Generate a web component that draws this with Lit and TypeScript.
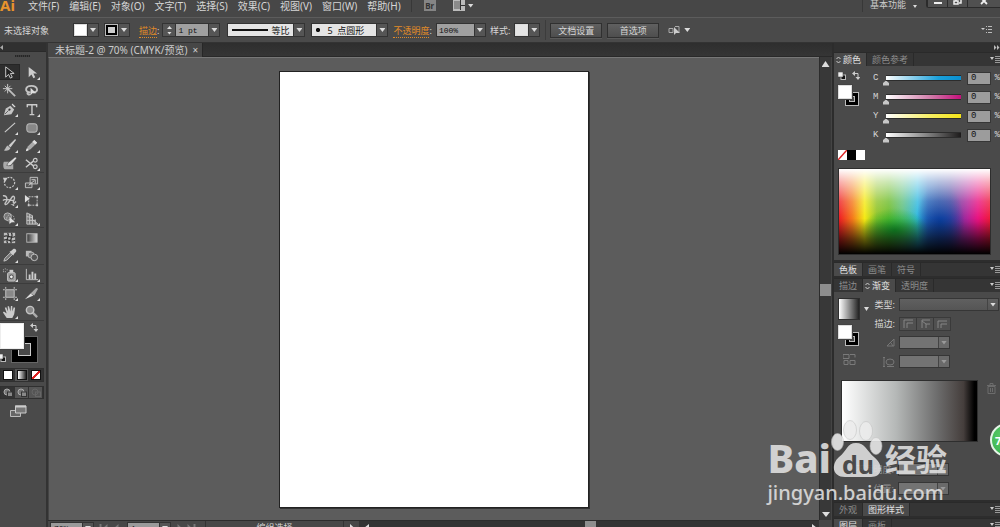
import { LitElement, html, svg, css } from "lit";
import { customElement, property } from "lit/decorators.js";

const ui = css`
  :host {
    font-family: "Noto Sans", "Noto Sans CJK SC", sans-serif;
    font-size: 9px;
    line-height: 13px;
    color: #d6d6d6;
    box-sizing: border-box;
  }
  *, *::before, *::after { box-sizing: border-box; }
  button, input, select {
    font: inherit;
    color: inherit;
    margin: 0;
    padding: 0;
    border: 0;
    border-radius: 0;
    background: none;
    outline: 0;
    appearance: none;
    min-width: 0;
  }
  svg { display: block; flex: none; }
  .mono { font-family: "Liberation Mono", "Noto Sans CJK SC", monospace; font-size: 8px; }
  .arrow {
    width: 11px;
    flex: none;
    align-self: stretch;
    display: grid;
    place-items: center;
    background: #555;
    border-left: 1px solid #333;
  }
  .arrow::before, .tri {
    content: "";
    width: 6px;
    height: 4px;
    background: #dcdcdc;
    clip-path: polygon(0 0, 100% 0, 50% 100%);
  }
`;

/* Tool glyphs, drawn on a 16 x 16 grid */
const tools: Record<string, [string, unknown]> = {
  select: ["选择工具", svg`<path d="M5 2v11l3-3 2 4 2-1-2-4h4z" fill="#222" stroke="#d0d0d0"/>`],
  direct: ["直接选择工具", svg`<path d="M5 2v11l3-3 2 4 2-1-2-4h4z" fill="#ccc"/>`],
  wand: ["魔棒工具", svg`<path d="M7 7l7 7" stroke="#bbb" stroke-width="2"/><path d="M6 1v10M1 6h10M3 3l6 6M9 3l-6 6" stroke="#ccc"/>`],
  lasso: ["套索工具", svg`<path d="M7 10C0 10 1 3 8 3s8 7 2 7M4 9c-1 3 1 4 3 3" fill="none" stroke="#c4c4c4" stroke-width="2"/><path d="M7 5v8l2-2h4z" fill="#ddd"/>`],
  pen: ["钢笔工具", svg`<path d="M2 14l2-7 5-3 4 4-3 5z" fill="#c4c4c4"/><path d="M10 3l1-2 4 4-2 1zM3 13l4-4" fill="#ddd" stroke="#444" stroke-width=".8"/><circle cx="8" cy="8" r="1.2" fill="#333"/>`],
  type: ["文字工具", svg`<path d="M3 3h11M8.500 3v10M6 13.500h5M3.500 2.500v3M13.500 2.500v3" stroke="#ccc" stroke-width="1.500"/>`],
  line: ["直线段工具", svg`<path d="M3 13L14 3" stroke="#ccc" stroke-width="1.200"/>`],
  round: ["圆角矩形工具", svg`<rect x="3" y="4" width="11" height="9" rx="2.500" fill="#888" stroke="#c4c4c4"/>`],
  brush: ["画笔工具", svg`<path d="M14 1L7 8l2 2 6-8z" fill="#ccc"/><path d="M6 8l3 3c-2 3-5 3-7 2 2-1 2-4 4-5z" fill="#bbb"/>`],
  pencil: ["铅笔工具", svg`<path d="M2 14l2-5 7-7 3 3-7 7z" fill="#aaa"/><path d="M11 2l3 3-2 2-3-3z" fill="#e0e0e0"/><path d="M2 14l1-3 2 2z" fill="#eee"/>`],
  blob: ["斑点画笔工具", svg`<path d="M2 6h6l-2 3 3 2 3-3v6H3c-2-1-2-6-1-8z" fill="#aaa"/><path d="M14 1L8 6c-2 1-2 3-3 4 3 1 5 0 6-2l5-6z" fill="#ddd" stroke="#444" stroke-width=".6"/>`],
  scissors: ["剪刀工具", svg`<circle cx="12" cy="4.500" r="2" fill="none" stroke="#ccc" stroke-width="1.300"/><circle cx="12" cy="11.500" r="2" fill="none" stroke="#ccc" stroke-width="1.300"/><path d="M2 4l8 6.500M2 12l8-6.500" stroke="#ccc" stroke-width="1.500"/>`],
  rotate: ["旋转工具", svg`<circle cx="8" cy="8" r="5.500" fill="none" stroke="#c4c4c4" stroke-width="1.300" stroke-dasharray="2 1.300"/><path d="M1 3l5 0-3 5z" fill="#ccc"/>`],
  scale: ["比例缩放工具", svg`<path d="M1.500 8.500h7v5h-7zM6.500 2.500h8v7h-8z" fill="#666" fill-opacity=".4" stroke="#c4c4c4"/><path d="M5 11l6-5M8 5h4v4" fill="none" stroke="#ccc"/>`],
  warp: ["宽度工具", svg`<path d="M1 3c5-1 5 5 3 7s0 4 3 0 4-8 6-6-3 6 0 7l2-2M1 8c3-3 7 0 11 0" fill="none" stroke="#c4c4c4" stroke-width="1.500"/><path d="M9 12h4v2z" fill="#ccc"/>`],
  free: ["自由变换工具", svg`<rect x="5" y="4" width="9" height="9" fill="none" stroke="#c4c4c4" stroke-dasharray="2 1"/><path d="M1 2v8l5-4z" fill="#ddd"/><path d="M13 3h2v2h-2zM13 12h2v2h-2zM4 12h2v2H4z" fill="#ccc"/>`],
  shape: ["形状生成器工具", svg`<circle cx="6" cy="6" r="4" fill="#777" stroke="#bbb"/><circle cx="9" cy="8" r="4" fill="none" stroke="#bbb" stroke-dasharray="2 1"/><path d="M8 6v8l2-2h4z" fill="#ddd"/>`],
  graph3: ["透视网格工具", svg`<path d="M3 2v12h12L9 9V5zM3 6l6 1M3 10h9M6 3v11M9 5v9M12 9v5" fill="#777" stroke="#c4c4c4"/>`],
  mesh: ["网格工具", svg`<rect x="2" y="3" width="12" height="11" fill="#bbb"/><path d="M2 7c4-3 8 3 12 0M2 11c4-3 8 3 12 0M6 3c3 4-3 7 0 11M10 3c3 4-3 7 0 11" fill="none" stroke="#333" stroke-width="1.300"/>`],
  grad: ["渐变工具", svg`<defs><linearGradient id="tg"><stop stop-color="#333"/><stop offset="1" stop-color="#ddd"/></linearGradient></defs><rect x="3" y="4" width="11" height="9" fill="url(#tg)" stroke="#bbb"/>`],
  drop: ["吸管工具", svg`<path d="M2 14l1-3 6-6 2 2-6 6z" fill="#777" stroke="#c4c4c4"/><path d="M8 4l4 4 1-2 2-2c1-2-1-4-3-3l-2 2z" fill="#ccc"/>`],
  blend: ["混合工具", svg`<rect x="2" y="3" width="6" height="6" fill="#bbb"/><rect x="4.500" y="4.500" width="6" height="6" rx="2" fill="#777" stroke="#bbb"/><circle cx="11" cy="10" r="3.500" fill="#555" stroke="#c4c4c4"/>`],
  spray: ["符号喷枪工具", svg`<rect x="6" y="6" width="8" height="9" rx="1" fill="#999" stroke="#ccc"/><path d="M8 3h4v3H8z" fill="#ccc"/><circle cx="10" cy="10.500" r="2" fill="#eee" stroke="#444"/><path d="M1 3h1M3 2h1M5 3h1M1 5h1M3 5h1" stroke="#bbb"/>`],
  chart: ["柱形图工具", svg`<path d="M2.500 2v11.500H15" fill="none" stroke="#c4c4c4"/><path d="M5 8h2v5H5zM8 5h2v8H8zM11 7h2v6h-2z" fill="#ccc"/>`],
  artboard: ["画板工具", svg`<rect x="4" y="4" width="9" height="8" fill="#888" stroke="#c4c4c4"/><path d="M4 1v2M13 1v2M4 13v2M13 13v2M1 4h2M1 12h2M14 4h2M14 12h2" stroke="#ccc"/>`],
  slice: ["切片工具", svg`<path d="M1 14l6-6 3 2z" fill="#ddd"/><path d="M7 8l6-6 2 1-4 7z" fill="#aaa"/>`],
  hand: ["抓手工具", svg`<path d="M5 15L1 9l1-1 3 2L3 4l1.500-.500L6.500 8 6 2.500h1.500L9 8l.500-6H11v6l1.500-4.500 1.500.500-1 7-2 4z" fill="#ccc"/>`],
  zoom: ["缩放工具", svg`<path d="M9 9l5 5" stroke="#aaa" stroke-width="2.500"/><circle cx="6.500" cy="6.500" r="4" fill="#888" stroke="#c4c4c4" stroke-width="1.500"/>`],
};
const toolGroups = [
  ["select", "direct", "wand", "lasso"],
  ["pen", "type", "line", "round", "brush", "pencil", "blob", "scissors"],
  ["rotate", "scale", "warp", "free", "shape", "graph3"],
  ["mesh", "grad", "drop", "blend"],
  ["spray", "chart"],
  ["artboard", "slice", "hand", "zoom"],
];
const plain = new Set(["select", "wand", "lasso", "blob", "mesh", "grad", "blend", "free", "zoom"]);

const swapIcon = html`<svg width="8" height="9" viewBox="0 0 8 9"><path d="M3 2.500h3v4" fill="none" stroke="#ccc"/><path d="M0 2.500L3 0v5zM3.500 6h5L6 9z" fill="#ccc"/></svg>`;
const defaultIcon = html`<svg width="8" height="8" viewBox="0 0 8 8"><rect x="3" y="3" width="4.500" height="4.500" fill="#111" stroke="#bbb"/><rect x="0" y="0" width="5" height="5" fill="#eee" stroke="#333" stroke-width=".5"/></svg>`;
const menuIcon = html`<svg width="10" height="9" viewBox="0 0 10 9"><path d="M0 2h4L2 5z" fill="#ccc"/><path d="M5 1.500h5M5 3.500h5M5 5.500h5M5 7.500h5" stroke="#999"/></svg>`;

@customElement("ai-menubar")
export class AiMenubar extends LitElement {
  static styles = [ui, css`
    :host { display: flex; align-items: flex-start; height: 17px; background: #474747; overflow: hidden; }
    nav { display: flex; gap: 10px; margin-left: 14px; font-size: 10px; line-height: 12px; }
    .logo { width: 14px; height: 12px; font-weight: 700; font-size: 15px; line-height: 10px; color: #e8932c; }
    .line { width: 1px; height: 12px; background: #383838; }
    .br { width: 12px; height: 11px; background: #858585; color: #333; font-size: 8px; font-weight: 700; line-height: 11px; text-align: center; margin: 0 17px 0 12px; }
    .layout { display: flex; align-items: center; gap: 3px; height: 11px; }
    .space { display: flex; align-items: flex-start; margin-left: auto; gap: 7px; line-height: 10px; color: #ccc; }
    .space .tri { margin-top: 5px; width: 4px; height: 3px; }
    .win { display: grid; grid-template-columns: 20px 20px 33px; height: 8px; margin-left: 9px; border: 1px solid #2b2b2b; border-top: 0; border-right: 0; border-radius: 0 0 0 3px; }
    .win button { display: grid; place-items: center; border-left: 1px solid #2b2b2b; background: #505050; }
  `];
  render() {
    const items = ["文件(F)", "编辑(E)", "对象(O)", "文字(T)", "选择(S)", "效果(C)", "视图(V)", "窗口(W)", "帮助(H)"];
    return html`
      <span class="logo">Ai</span>
      <nav>${items.map((t) => html`<button>${t}</button>`)}<span class="line"></span></nav>
      <button class="br" aria-label="Bridge">Br</button>
      <button class="layout" aria-label="排列文档"><svg width="12" height="11" viewBox="0 0 12 11"><path d="M0 0h12v11H0z" fill="#bbb"/><path d="M1 1h6v8H1z" fill="#8a8a8a"/><path d="M7.500 0v10M8 5.500h4" stroke="#333"/></svg><i class="tri"></i></button>
      <button class="space"><span class="line"></span>基本功能<i class="tri"></i></button>
      <div class="win">
        <button aria-label="最小化"><svg width="8" height="7" viewBox="0 0 8 7"><path d="M0 3h8" stroke="#eee" stroke-width="2"/></svg></button>
        <button aria-label="还原"><svg width="9" height="7" viewBox="0 0 9 7"><path d="M3 0v1M8 0v3H6M1 1h4v3H1z" fill="none" stroke="#eee" stroke-width="1.500"/></svg></button>
        <button aria-label="关闭"><svg width="8" height="7" viewBox="0 0 8 7"><path d="M1 4l6-6M1-2l6 6" stroke="#eee" stroke-width="1.800"/></svg></button>
      </div>`;
  }
}

@customElement("ai-control-bar")
export class AiControlBar extends LitElement {
  static styles = [ui, css`
    :host { display: flex; align-items: center; height: 26px; padding: 0 8px 0 4px; background: #4a4a4a; border-top: 1px solid #5c5c5c; border-bottom: 1px solid #333; white-space: nowrap; }
    .box { display: flex; align-items: center; height: 14px; border: 1px solid #333; background: #a0a0a0; color: #111; position: relative; }
    .chip { width: 13px; height: 12px; background: #fff; border: 1px solid #ddd; }
    .chip.ring { background: #ccc; border: 3px solid #000; outline: 1px solid #bbb; outline-offset: -1px; }
    .chip.pale { background: #e4e4e4; }
    .state { width: 69px; }
    .l1 { margin: 0 3px 0 9px; }
    .l2 { margin: 0 4px 0 5px; }
    .l3 { margin: 0 4px; }
    .gap { margin-left: 5px; }
    .similar { display: flex; align-items: center; gap: 4px; margin-left: 9px; }
    .link { color: #e08a28; border-bottom: 1px dotted #e08a28; line-height: 11px; }
    .spin { display: grid; width: 13px; height: 14px; border: 1px solid #333; border-right: 0; background: #555; place-items: center; }
    .spin .tri { width: 5px; height: 3px; }
    .up { transform: rotate(180deg); }
    .sel { width: 100%; height: 12px; background: #e4e4e4; }
    .profile { width: 78px; margin-left: 7px; }
    .profile .sel { padding-left: 43px; background: linear-gradient(#111, #111) 4px 5px / 36px 2px no-repeat, #e4e4e4; }
    .brush { width: 77px; margin-left: 6px; }
    .brush .sel { padding-left: 15px; background: radial-gradient(circle at 6px 6px, #111 1.800px, transparent 2.400px), #e4e4e4; }
    .num { padding-left: 2px; height: 12px; }
    .pt { width: 32px; } .pct { width: 37px; }
    .btn { width: 52px; height: 15px; border: 1px solid #303030; background: linear-gradient(#606060, #4e4e4e); box-shadow: 0 1px 0 #5a5a5a; }
    .sep { width: 1px; height: 20px; background: #3c3c3c; margin: 0 4px 0 5px; }
    .tail { margin-left: auto; }
  `];
  render() {
    return html`
      <span class="state">未选择对象</span>
      <button class="box" aria-label="填色"><span class="chip"></span><i class="arrow"></i></button>
      <button class="box gap" aria-label="描边颜色"><span class="chip ring"></span><i class="arrow"></i></button>
      <label for="w" class="l1"><span class="link">描边</span>:</label>
      <button class="spin" aria-label="粗细增减"><i class="tri up"></i><i class="tri"></i></button>
      <span class="box"><input id="w" class="num mono pt" value="1 pt"><i class="arrow"></i></span>
      <span class="box profile"><select class="sel" aria-label="变量宽度配置文件"><option>等比</option></select><i class="arrow"></i></span>
      <span class="box brush"><select class="sel" aria-label="画笔定义"><option>5&nbsp; 点圆形</option></select><i class="arrow"></i></span>
      <label for="o" class="l2"><span class="link">不透明度</span>:</label>
      <span class="box"><input id="o" class="num mono pct" value="100%"><i class="arrow"></i></span>
      <span class="l3">样式:</span>
      <button class="box" aria-label="图形样式"><span class="chip pale"></span><i class="arrow"></i></button>
      <i class="sep"></i>
      <button class="btn">文档设置</button>
      <button class="btn gap">首选项</button>
      <button aria-label="选择类似的对象" class="similar"><svg width="12" height="11" viewBox="0 0 12 11"><path d="M1 3.500h4v4H1zM7 1.500h4v6" fill="none" stroke="#aaa"/><path d="M6 2v8l2-2h4z" fill="#ccc"/></svg><i class="tri"></i></button>
      <button class="tail" aria-label="面板菜单"><svg width="11" height="8" viewBox="0 0 11 8"><path d="M0 2h4L2 4z" fill="#ccc"/><path d="M5 .5h1M7 .5h4M5 3.500h1M7 3.500h4M5 6.500h1M7 6.500h4" stroke="#bbb"/></svg></button>`;
  }
}

@customElement("ai-toolbox")
export class AiToolbox extends LitElement {
  static styles = [ui, css`
    :host { display: block; background: #4a4a4a; border-right: 2px solid #333; overflow: hidden; }
    .head { height: 9px; background: #303030; border-bottom: 1px solid #2a2a2a; padding-top: 2px; }
    .grip { height: 11px; display: flex; justify-content: center; padding: 3px 2px 0 0; }
    .grip i { width: 15px; height: 2px; background: repeating-linear-gradient(90deg, #262626 0 1px, #3a3a3a 1px 2px); }
    .group { display: grid; grid-template-columns: 22px 22px; grid-auto-rows: 18px; border-bottom: 1px solid #3c3c3c; width: 44px; margin-right: auto; }
    .tool { display: grid; place-items: center; position: relative; }
    .tool.on { background: #2e2e2e; border: 1px solid #262626; border-left: 0; margin: 1px 2px 1px 0; }
    .tool svg { width: 15px; height: 15px; margin-right: 4px; }
    .tool.on svg { margin-right: 2px; }
    .tool.more::after { content: ""; position: absolute; right: 4px; bottom: 1px; width: 3px; height: 3px; background: #ddd; clip-path: polygon(100% 0, 100% 100%, 0 100%); }
    .paint { position: relative; height: 47px; }
    .fill { position: absolute; left: 0; top: 2px; width: 24px; height: 26px; background: #fff; border: 1px solid #eee; box-shadow: 0 0 0 1px #444; }
    .stroke { position: absolute; left: 12px; top: 16px; width: 25px; height: 25px; border: 6px solid #000; background: #4a4a4a; box-shadow: inset 0 0 0 1px #ccc, 0 0 0 1px #666; }
    .swap { position: absolute; left: 30px; top: 2px; }
    .def { position: absolute; left: -2px; top: 33px; }
    .modes { display: grid; grid-template-columns: repeat(3, 1fr); width: 44px; height: 14px; border: 1px solid #303030; background: #555; }
    .modes + .modes { height: 13px; margin-top: 4px; }
    .modes button { display: grid; place-items: center; border-right: 1px solid #333; }
    .modes .on { background: #333; }
    .sw { width: 10px; height: 10px; border: 1px solid #111; background: #fff; }
    .sw.g { background: linear-gradient(90deg, #fff, #222); }
    .sw.n { background: linear-gradient(to bottom right, #fff 42%, #d22 42% 58%, #fff 58%); }
    .screen { display: block; margin: 6px 0 0 10px; }
  `];
  render() {
    return html`
      <div class="head"><svg width="4" height="5" viewBox="0 0 4 5"><path d="M3 0v5L0 2.500z" fill="#aaa"/></svg></div>
      <div class="grip"><i></i></div>
      ${toolGroups.map((g) => html`<div class="group">${g.map((k) => html`
        <button class="tool ${k === "select" ? "on" : ""} ${plain.has(k) ? "" : "more"}" aria-label=${tools[k][0]}>
          <svg viewBox="0 0 16 16">${tools[k][1]}</svg></button>`)}</div>`)}
      <div class="paint">
        <button class="stroke" aria-label="描边"></button>
        <button class="fill" aria-label="填色"></button>
        <button class="swap" aria-label="互换">${swapIcon}</button>
        <button class="def" aria-label="默认">${defaultIcon}</button>
      </div>
      <div class="modes"><button class="on" aria-label="颜色"><i class="sw"></i></button><button aria-label="渐变"><i class="sw g"></i></button><button class="on" aria-label="无"><i class="sw n"></i></button></div>
      <div class="modes">
        ${["#aaa", "#aaa", "#666"].map((c, i) => html`<button class=${i ? "" : "on"} aria-label="绘图模式"><svg width="10" height="9" viewBox="0 0 10 9"><circle cx="4" cy="4" r="3" fill=${i === 2 ? "none" : "#777"} stroke=${c}/><rect x="4.500" y="4" width="5" height="4.500" fill=${i === 2 ? "none" : "#888"} stroke=${i === 2 ? c : "#333"}/></svg></button>`)}
      </div>
      <button class="screen" aria-label="更改屏幕模式"><svg width="17" height="13" viewBox="0 0 17 13"><path d="M.5 5.500h10v6H.5z" fill="#666" stroke="#bbb"/><path d="M5.500 1h10.500v7H5.500z" fill="#777" stroke="#ccc"/><path d="M5 1.500h11" stroke="#ccc" stroke-width="2"/></svg></button>`;
  }
}

@customElement("ai-document")
export class AiDocument extends LitElement {
  static styles = [ui, css`
    :host { display: grid; grid-template: 14px 1fr 7px / 1fr 13px; min-width: 0; min-height: 0; overflow: hidden; }
    .tabs { grid-column: 1 / 3; background: linear-gradient(#2e2e2e, #353535); border-bottom: 1px solid #292929; }
    .tab { display: flex; align-items: center; gap: 5px; width: max-content; height: 14px; padding: 0 4px 0 7px; background: #474747; border-right: 1px solid #272727; font-size: 10px; color: #ccc; }
    .canvas { display: grid; place-items: center; background: #5c5c5c; border-top: 1px solid #777; border-left: 1px solid #444; min-height: 0; }
    .board { height: calc(100% - 25px); aspect-ratio: 310 / 437; background: #fff; border: 1px solid #222; box-shadow: 1px 1px 0 #333; }
    .vbar { display: flex; flex-direction: column; align-items: center; justify-content: space-between; background: #383838; border-left: 1px solid #2c2c2c; border-right: 1px solid #444; padding: 4px 0 3px; }
    .vbar .t { width: 8px; height: 6px; background: #ddd; clip-path: polygon(0 100%, 100% 100%, 50% 0); }
    .vbar .d { transform: rotate(180deg); height: 5px; }
    .thumb { width: 11px; height: 12px; background: #8e8e8e; }
    .status { display: grid; grid-template-columns: 311px 1fr; overflow: hidden; background: #474747; border-top: 1px solid #2c2c2c; }
    .info, .hbar { height: 14px; display: flex; align-items: center; }
    .field { display: flex; height: 13px; background: #9a9a9a; color: #111; border: 1px solid #333; margin-left: 2px; }
    .field input { width: 31px; padding-left: 3px; }
    .nav { width: 31px; display: flex; justify-content: center; }
    .mode { flex: 1; text-align: center; border-left: 1px solid #333; border-right: 1px solid #333; margin-left: 3px; line-height: 14px; }
    .hbar { background: #333; justify-content: space-between; padding: 0 2px 0 5px; }
    .hbar .thumb { height: 14px; }
    .corner { background: #474747; }
  `];
  render() {
    const nav = (d: string) => html`<svg class="nav" width="20" height="9" viewBox="0 0 20 9"><path d=${d} fill="#777"/></svg>`;
    return html`
      <div class="tabs"><button class="tab">未标题-2 @ 70% (CMYK/预览)<span>×</span></button></div>
      <div class="canvas"><div class="board"></div></div>
      <div class="vbar"><i class="t"></i><i class="thumb"></i><i class="t d"></i></div>
      <div class="status">
        <div class="info">
          <span class="field mono"><input aria-label="缩放" value="70%"><i class="arrow"></i></span>
          ${nav("M0 0h2v9H0zM8 0v9L3 4.500zM19 0v9l-5-4.500z")}
          <span class="field mono"><input aria-label="画板" value="1"><i class="arrow"></i></span>
          ${nav("M1 0v9l5-4.500zM11 0v9l5-4.500zM17 0h2v9h-2z")}
          <span class="mode">编组选择</span>
          <svg width="15" height="9" viewBox="0 0 15 9"><path d="M6 0v9l5-4.500z" fill="#ddd"/></svg>
        </div>
        <div class="hbar"><svg width="5" height="8" viewBox="0 0 5 8"><path d="M5 0v8L0 4z" fill="#ddd"/></svg><i class="thumb"></i><svg width="5" height="8" viewBox="0 0 5 8"><path d="M0 0v8l5-4z" fill="#ddd"/></svg></div>
      </div>
      <div class="corner"></div>`;
  }
}

@customElement("ai-tabs")
export class AiTabs extends LitElement {
  @property({ attribute: false }) labels: string[] = [];
  @property({ type: Number }) active = 0;
  @property({ type: Boolean }) cycle = false;
  static styles = [ui, css`
    :host { display: flex; height: 14px; background: #353535; flex: none; border-top: 1px solid #2a2a2a; }
    button { display: flex; align-items: center; gap: 2px; padding: 0 5px; color: #8c8c8c; border-right: 1px solid #2a2a2a; white-space: nowrap; }
    .on { background: #4a4a4a; color: #e0e0e0; }
    .cycle { padding-left: 2px; }
    .menu { margin-left: auto; border: 0; padding: 0; }
  `];
  render() {
    return html`${this.labels.map((l, i) => html`<button class="${i === this.active ? "on" : ""} ${i === this.active && this.cycle ? "cycle" : ""}">
        ${i === this.active && this.cycle ? html`<svg width="5" height="8" viewBox="0 0 5 8"><path d="M.5 3l2-2 2 2M.5 5l2 2 2-2" fill="none" stroke="#ccc"/></svg>` : ""}${l}</button>`)}
      <button class="menu" aria-label="面板菜单">${menuIcon}</button>`;
  }
}

@customElement("ai-panels")
export class AiPanels extends LitElement {
  static styles = [ui, css`
    :host { display: flex; flex-direction: column; background: #4a4a4a; border-left: 2px solid #2c2c2c; overflow: hidden; min-height: 0; }
    .head { height: 9px; flex: none; background: #303030; display: flex; justify-content: flex-end; align-items: center; }
    .gap { height: 2px; flex: none; background: #2d2d2d; }
    .last { margin-bottom: -5px; }
    .color { padding: 6px 0 5px 4px; }
    .cols { display: grid; grid-template-columns: 35px 1fr; }
    .left { display: grid; align-content: start; position: relative; }
    .icons { display: flex; gap: 6px; margin: -1px 0 5px; height: 9px; align-items: center; }
    .pair { display: grid; grid-template: 7px 7px 7px / 7px 7px 7px; }
    .f { grid-area: 1 / 1 / 3 / 3; background: #fff; border: 1px solid #ddd; box-shadow: 0 0 0 1px #444; z-index: 1; }
    .s { grid-area: 2 / 2 / 4 / 4; border: 4px solid #000; outline: 1px solid #bbb; outline-offset: -1px; background: #4a4a4a; box-shadow: inset 0 0 0 1px #bbb; }
    .row { display: grid; grid-template-columns: 13px 1fr 6px 24px 9px; height: 13px; margin-bottom: 6px; align-items: center; font-size: 9px; }
    .row input[type="text"] { grid-column: 4; height: 13px; background: #9c9c9c; border: 1px solid #363636; color: #111; padding-left: 3px; }
    .row span { text-align: right; }
    input[type="range"] { height: 13px; margin: 0 -3px; background: var(--ramp) center 4px / calc(100% - 6px) 4px no-repeat, linear-gradient(#2c2c2c, #2c2c2c) center 3px / calc(100% - 6px) 6px no-repeat; }
    input[type="range"]::-webkit-slider-thumb { appearance: none; width: 6px; height: 5px; margin-top: 9px; background: #c8c8c8; clip-path: polygon(50% 0, 100% 50%, 100% 100%, 0 100%, 0 50%); }
    .chips { display: grid; grid-template-columns: repeat(3, 9px); height: 10px; margin-top: 2px; }
    .k { background: #000; } .w { background: #fff; }
    .spectrum { height: 87px; margin: 8px 9px 0 0; border: 1px solid #2e2e2e;
      background:
        linear-gradient(#fff 0, rgba(255,255,255,.65) 15%, rgba(255,255,255,.2) 38%, rgba(255,255,255,0) 58%, rgba(0,0,0,.08) 62%, rgba(0,0,0,.6) 82%, #000 100%),
        radial-gradient(ellipse 16% 45% at 67% 62%, #0b3f9e, transparent),
        radial-gradient(ellipse 22% 26% at 37% 72%, #16a82e, transparent),
        linear-gradient(90deg, #ee1c24 0, #f47a1a 9%, #f5ea14 17%, #90c428 25%, #6cbc2c 33%, #5fc080 42%, #30b8e0 52%, #2a70c0 59%, #2c50a8 66%, #4a3c9c 74%, #b0249a 85%, #ea1280 92%, #ee1a3a 100%); }
    .grad { flex: 1; padding: 6px 0 0 4px; min-height: 0; }
    .form { display: grid; grid-template-columns: 22px 1fr; row-gap: 6px; column-gap: 4px; grid-auto-rows: 13px; align-items: center; }
    .form.wide { grid-template-columns: 56px 1fr; margin-top: 21px; }
    .lab { text-align: right; white-space: nowrap; justify-self: end; }
    .dim { color: #8e8e8e; }
    .box { display: flex; width: 51px; height: 13px; border: 1px solid #363636; background: #737373; }
    .box select, .box input { flex: 1; width: 100%; }
    .box .arrow { background: #6a6a6a; border-color: #444; }
    .box .arrow::before { background: #999; }
    .box.full { width: auto; margin-right: 1px; background: linear-gradient(#606060, #555); }
    .box.full .arrow { background: none; border-left: 1px solid #444; }
    .box.full .arrow::before { background: #ddd; }
    .trio { display: grid; grid-template-columns: repeat(3, 17px); height: 14px; border: 1px solid #3a3a3a; width: 52px; }
    .trio button { border-right: 1px solid #3a3a3a; display: grid; place-items: center; background: #505050; }
    .swatch { display: flex; align-items: center; gap: 4px; margin-bottom: 5px; }
    .swatch i:first-child { width: 22px; height: 22px; background: linear-gradient(90deg, #fff, #222); border: 1px solid #2e2e2e; }
    .swatch .tri { width: 5px; }
    .rev { margin: 8px 0 0 5px; }
    .ramprow { display: flex; gap: 9px; margin: 12px 0 0 3px; padding-right: 4px; }
    .ramprow svg { margin-top: 3px; }
    .ramp { flex: 1; height: 62px; border: 1px solid #2e2e2e; background: linear-gradient(90deg, #fff 0, #b5b8b7 40%, #6e6e6e 70%, #453e3c 90%, #000 98%); }
  `];
  render() {
    const inks: [string, string][] = [
      ["C", "linear-gradient(90deg,#fff,#1aa0da 70%,#0a8fd0)"],
      ["M", "linear-gradient(90deg,#fff,#d07aa8 60%,#c4107c)"],
      ["Y", "linear-gradient(90deg,#fff,#f6ee60 60%,#f4e418)"],
      ["K", "linear-gradient(90deg,#fff,#777 60%,#1c1a1a)"],
    ];
    const corner = ["M2 10V2h9M5 10V5h6", "M3 10V2h8M3 3l4 3M7 10V6h4", "M2 10V3h9M5 10V6h6"];
    return html`
      <div class="head"><svg width="6" height="5" viewBox="0 0 6 5"><path d="M0 0v5l2.500-2.500zM3 0v5l2.500-2.500z" fill="#bbb"/></svg></div>
      <ai-tabs .labels=${["颜色", "颜色参考"]} cycle></ai-tabs>
      <section class="color">
        <div class="cols">
          <div class="left">
            <div class="icons">${defaultIcon}${swapIcon}</div>
            <div class="pair"><i class="f"></i><i class="s"></i></div>
          </div>
          <div>
            ${inks.map(([n, g]) => html`<div class="row mono">
              <label for="r${n}">${n}</label>
              <input id="r${n}" type="range" min="0" max="100" value="0" style="--ramp:${g}">
              <input type="text" aria-label=${n} value="0"><span>%</span></div>`)}
          </div>
        </div>
        <div class="chips"><svg width="9" height="10" viewBox="0 0 9 10"><path d="M0 0h9v10H0z" fill="#fff"/><path d="M0 10L9 0" stroke="#d22" stroke-width="1.500"/></svg><i class="k"></i><i class="w"></i></div>
        <div class="spectrum"></div>
      </section>
      <div class="gap"></div>
      <ai-tabs .labels=${["色板", "画笔", "符号"]}></ai-tabs>
      <div class="gap"></div>
      <ai-tabs .labels=${["描边", "渐变", "透明度"]} active="1" cycle></ai-tabs>
      <section class="grad">
        <div class="cols">
          <div class="left">
            <div class="swatch"><i></i><i class="tri"></i></div>
            <div class="pair"><i class="f"></i><i class="s"></i></div>
            <svg class="rev" width="13" height="11" viewBox="0 0 13 11"><path d="M0 .5h6v4H0zM7 .5h5v3M1 6.500h4v4H1zM7 6.500h5v4H7z" fill="none" stroke="#7a7a7a"/></svg>
          </div>
          <div class="form">
            <label class="lab" for="gt">类型:</label>
            <span class="box full"><select id="gt"><option></option></select><i class="arrow"></i></span>
            <span class="lab">描边:</span>
            <span class="trio">${corner.map((d) => html`<button aria-label="描边渐变"><svg width="12" height="11" viewBox="0 0 12 11"><path d=${d} fill="none" stroke="#858585"/></svg></button>`)}</span>
            <svg class="lab" width="9" height="8" viewBox="0 0 9 8"><path d="M8 0L1 7h7zM5 4l2 3" fill="none" stroke="#777"/></svg>
            <span class="box"><input aria-label="角度"><i class="arrow"></i></span>
            <svg class="lab" width="12" height="10" viewBox="0 0 12 10"><ellipse cx="7" cy="5" rx="4" ry="3" fill="none" stroke="#777"/><path d="M1 0v10M0 .5h2M0 9.500h2M4 9.500h7" stroke="#777"/></svg>
            <span class="box"><input aria-label="长宽比"><i class="arrow"></i></span>
          </div>
        </div>
        <div class="ramprow"><div class="ramp"></div><svg width="9" height="11" viewBox="0 0 9 11"><path d="M1 3.500h7v7H1zM0 2.500h9M3 2V.5h3V2M3.500 5v4M5.500 5v4" fill="none" stroke="#6c6c6c"/></svg></div>
        <div class="form wide">
          <label class="lab dim" for="go">不透明度:</label><span class="box"><input id="go"><i class="arrow"></i></span>
          <label class="lab dim" for="gp">位置:</label><span class="box"><input id="gp"><i class="arrow"></i></span>
        </div>
      </section>
      <div class="gap"></div>
      <ai-tabs .labels=${["外观", "图形样式"]} active="1"></ai-tabs>
      <div class="gap"></div>
      <ai-tabs class="last" .labels=${["图层", "画板"]}></ai-tabs>`;
  }
}

@customElement("app-root")
export class AppRoot extends LitElement {
  static styles = [ui, css`
    :host { display: grid; grid-template: auto auto 1fr / 48px 1fr 168px; height: 100vh; overflow: hidden; background: #4a4a4a; position: relative; }
    ai-menubar, ai-control-bar { grid-column: 1 / -1; }
    .mark { position: absolute; right: 53px; bottom: 22px; color: #e2e2e2; opacity: .88; pointer-events: none; }
    .brand { display: flex; align-items: flex-end; height: 58px; margin-bottom: 3px; }
    .bai { font-family: "Noto Sans", sans-serif; font-size: 40px; line-height: 40px; height: 40px; font-weight: 800; }
    .jy { font-size: 31px; line-height: 31px; height: 36px; font-weight: 700; font-family: "Noto Sans CJK SC", sans-serif; }
    .du { font-family: "Noto Sans", sans-serif; font-size: 25px; font-weight: 700; }
    .url { font-size: 20px; line-height: 24px; font-weight: 500; }
    .ball { position: absolute; right: -24px; bottom: 70px; width: 34px; height: 34px; border-radius: 50%; border: 2px solid #e6f5e8; background: radial-gradient(circle at 40% 40%, #5fcf6c, #2ba845); color: #fff; text-align: left; padding-left: 3px; font-weight: 700; font-size: 11px; }
  `];
  render() {
    return html`
      <ai-menubar></ai-menubar>
      <ai-control-bar></ai-control-bar>
      <ai-toolbox></ai-toolbox>
      <ai-document></ai-document>
      <ai-panels></ai-panels>
      <div class="mark">
        <div class="brand">
          <span class="bai">Bai</span>
          <svg width="54" height="58" viewBox="0 0 54 58">
            <g fill="#ececec" stroke="#c0c0c0" stroke-width=".6">
              <ellipse cx="19" cy="10" rx="6.500" ry="9.500"/><ellipse cx="35" cy="11" rx="6.500" ry="9.500"/>
              <ellipse cx="6.500" cy="22" rx="6" ry="8.500"/><ellipse cx="45" cy="26" rx="6" ry="8.500"/>
            </g>
            <path d="M25 23c9 0 11 8 18 14 11 9 8 20-3 20H14C1 57 0 44 8 37c8-6 8-14 17-14z" fill="#e2e2e2"/>
            <text class="du" x="11" y="54" fill="#4c4c4c">du</text>
          </svg>
          <span class="jy">经验</span>
        </div>
        <div class="url">jingyan.baidu.com</div>
      </div>
      <button class="ball">7</button>`;
  }
}
